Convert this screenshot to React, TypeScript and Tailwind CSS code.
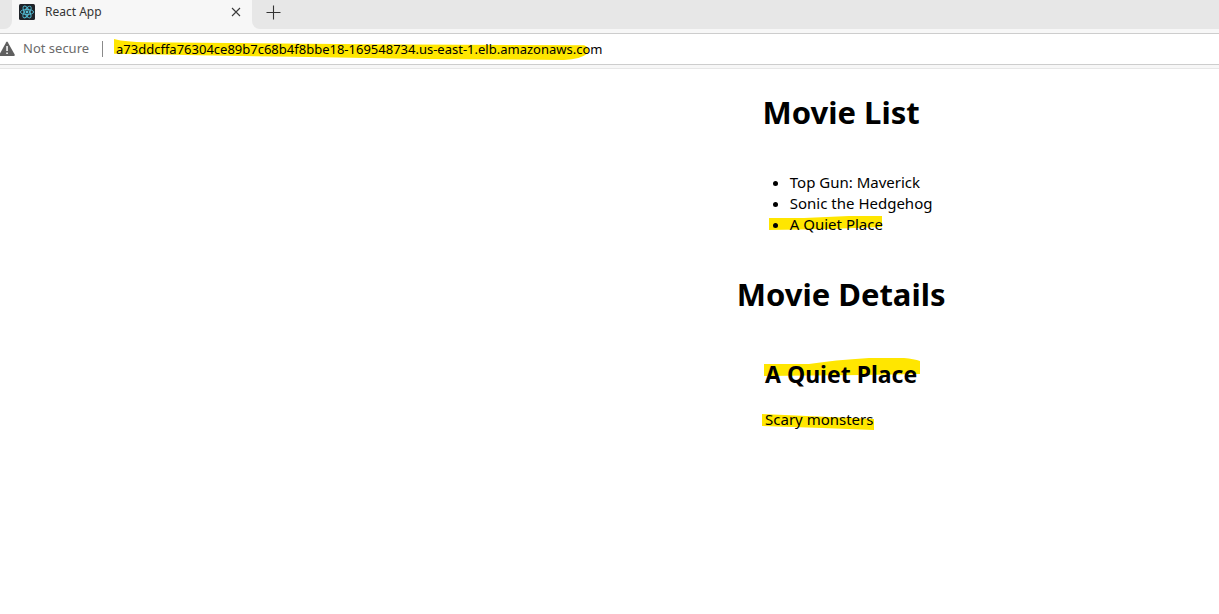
import React, { useState } from "react";

const movies = ["Top Gun: Maverick", "Sonic the Hedgehog", "A Quiet Place"];

function ReactLogo() {
  return (
    <svg className="size-4 shrink-0" viewBox="0 0 16 16" aria-hidden="true">
      <rect width="16" height="16" rx="1.5" fill="#1f2329" />
      <g fill="none" stroke="#53bcd4" strokeWidth="0.9">
        <ellipse cx="8" cy="8" rx="6.6" ry="2.6" />
        <ellipse cx="8" cy="8" rx="6.6" ry="2.6" transform="rotate(60 8 8)" />
        <ellipse cx="8" cy="8" rx="6.6" ry="2.6" transform="rotate(120 8 8)" />
      </g>
      <circle cx="8" cy="8" r="1.4" fill="#53bcd4" />
    </svg>
  );
}

function Marker({ className, viewBox, d }: { className: string; viewBox: string; d: string }) {
  return (
    <svg className={`absolute -z-10 ${className}`} viewBox={viewBox} preserveAspectRatio="none" aria-hidden="true">
      <path d={d} fill="#ffe600" />
    </svg>
  );
}

function TabStrip() {
  return (
    <header className="flex h-[29px] bg-[#f7f7f7]">
      <div className="w-3 rounded-br-lg bg-[#e7e7e7]" />
      <div className="flex w-60 items-start pl-[7px] pr-2">
        <div className="flex h-6 flex-1 items-center">
          <ReactLogo />
          <span className="ml-[10px] flex-1 text-[12px] leading-4 text-[#333]">React App</span>
          <button type="button" aria-label="Close tab" className="flex size-4 items-center justify-center">
            <svg className="size-[10px]" viewBox="0 0 10 10" stroke="#3b3b3b" strokeWidth="1.1">
              <path d="M1 1l8 8M9 1l-8 8" />
            </svg>
          </button>
        </div>
      </div>
      <div className="flex-1 rounded-bl-lg bg-[#e7e7e7] pl-[13px]">
        <button type="button" aria-label="New tab" className="flex h-6 w-4 items-center justify-center">
          <svg className="size-[15px] shrink-0" viewBox="0 0 15 15" stroke="#333" strokeWidth="1.1">
            <path d="M7.5 .5v14M.5 7.5h14" />
          </svg>
        </button>
      </div>
    </header>
  );
}

function AddressBar() {
  const [url, setUrl] = useState("a73ddcffa76304ce89b7c68b4f8bbe18-169548734.us-east-1.elb.amazonaws.com");
  return (
    <div className="border-b border-[#e7e7e7] bg-[#f7f7f7] pt-1 pb-[3px]">
      <div className="flex h-8 items-center border-y border-[#cdcdcd] bg-white text-[13px]">
        <svg className="h-4 w-[15px] shrink-0" viewBox="0 0 15 16" aria-hidden="true">
          <path d="M6.2 1.2Q7 0 7.8 1.2L14.7 13.4Q15 15 14 15H0Q-1 15-.5 13.4Z" fill="#5f5f5f" />
          <path d="M6.3 5h1.5v5H6.3zM6.3 11.5h1.5V13H6.3z" fill="#fff" />
        </svg>
        <span className="ml-2 w-[67px] whitespace-nowrap text-[#6b6b6b]">Not secure</span>
        <span className="ml-3 h-4 w-px bg-[#8a8a8a]" />
        <div className="relative isolate ml-[13px] flex-1">
          <Marker
            className="-left-[2px] top-0 h-[21px] w-[476px]"
            viewBox="0 0 476 20"
            d="M0 0Q12 3 32 3L250 5L470 6Q478 9 473 14Q467 19 450 20L310 19L180 17L0 14Z"
          />
          <input
            aria-label="Address"
            value={url}
            onChange={(e) => setUrl(e.target.value)}
            className="block h-5 w-full bg-transparent text-black outline-none"
          />
        </div>
      </div>
    </div>
  );
}

export default function App() {
  return (
    <div className="min-h-screen bg-white font-['Noto_Sans','Open_Sans',sans-serif] text-black">
      <TabStrip />
      <AddressBar />
      <main className="flex flex-col items-center pl-[38%] pt-[22px] text-[15px] leading-[21px]">
        <h1 className="text-[31px] font-bold leading-[43px]">Movie List</h1>
        <ul className="mt-[38px] list-disc pl-10">
          {movies.map((movie) => (
            <li key={movie} className="isolate">
              {movie === "A Quiet Place" ? (
                <span className="relative">
                  {movie}
                  <Marker
                    className="-left-[21px] top-[2px] h-[14px] w-[113px]"
                    viewBox="0 0 113 14"
                    d="M0 2L35 2L80 0H113V11L60 13L0 14Z"
                  />
                </span>
              ) : (
                movie
              )}
            </li>
          ))}
        </ul>
        <h1 className="mt-[38px] text-[31px] font-bold leading-[43px]">Movie Details</h1>
        <section className="mt-[42px]">
          <h2 className="relative isolate text-[23px] font-bold leading-8">
            A Quiet Place
            <Marker
              className="-left-px top-0 h-[19px] w-[156px]"
              viewBox="0 0 156 19"
              d="M0 6L45 6Q70 2 105 0H140Q150 1 156 3V16L100 17L0 18Z"
            />
          </h2>
          <p className="relative isolate mt-[19px]">
            Scary monsters
            <Marker
              className="-left-[3px] top-[5px] h-4 w-28"
              viewBox="0 0 112 16"
              d="M0 0L45 2L112 5V16L60 14L0 12Z"
            />
          </p>
        </section>
      </main>
    </div>
  );
}
